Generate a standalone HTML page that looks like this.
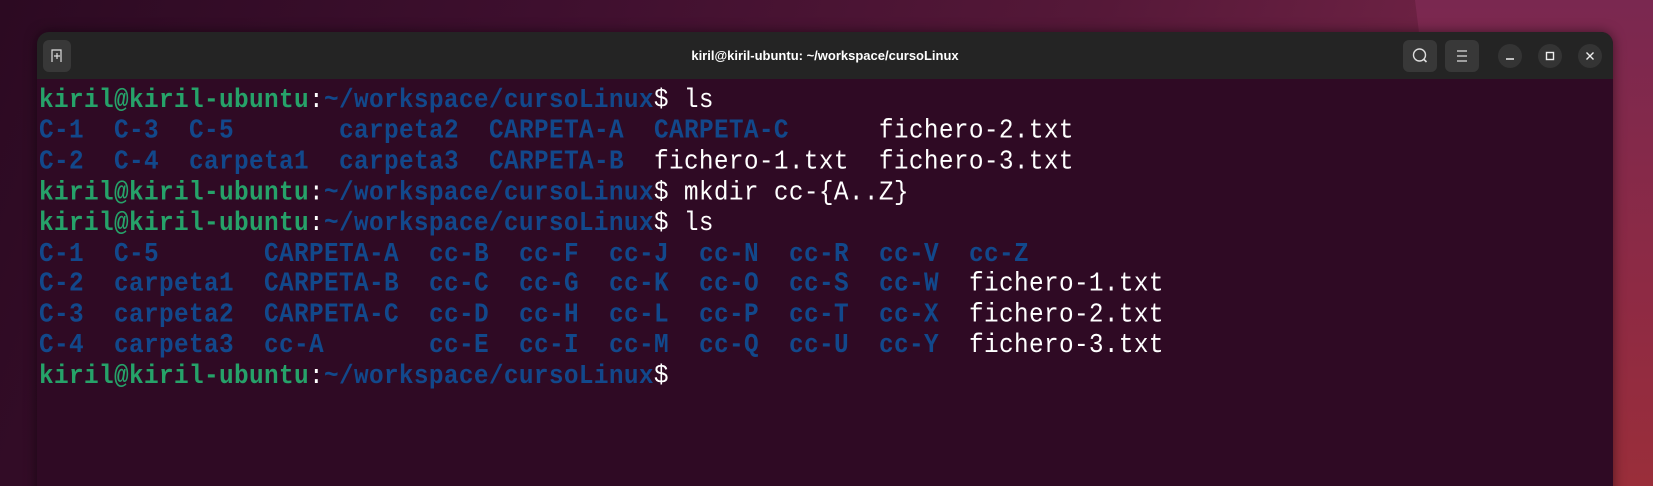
<!DOCTYPE html>
<html><head><meta charset="utf-8"><style>
html,body{margin:0;padding:0;width:1653px;height:486px;overflow:hidden}
body{background:linear-gradient(110deg,#2c0a22 0%,#3e0f2e 30%,#551838 60%,#6e2244 80%,#8a2a48 100%);position:relative;font-family:"Liberation Sans",sans-serif}
.r1{position:absolute;left:1415px;top:0;width:300px;height:486px;background:linear-gradient(180deg,#7a2850,#8e2a44 60%,#9a2e3a);clip-path:polygon(0 0,100% 0,100% 100%,20% 100%)}
.win{position:absolute;left:37px;top:32px;width:1576px;height:470px;border-radius:12px 12px 0 0;overflow:hidden;background:#2f0a24;box-shadow:0 0 12px rgba(0,0,0,.5)}
.tb{height:47px;background:#242424;position:relative}
.t{position:absolute;left:0;right:0;top:16px;text-align:center;color:#fff;font-weight:bold;font-size:13px}
.btn{position:absolute;top:8px;width:34px;height:32px;background:#383838;border-radius:6px}
.c{position:absolute;top:12px;width:24px;height:24px;border-radius:50%;background:#343434}
pre{margin:0;position:absolute;left:2px;top:54px;font-family:"Liberation Mono",monospace;font-size:24.4px;letter-spacing:0.36px;line-height:27.9px;color:#fff;transform:scaleY(1.1);transform-origin:0 0}
.g{color:#26a269;font-weight:bold}.b{color:#12488b;font-weight:bold}
</style></head><body>
<div class="r1"></div>
<div class="win">
<div class="tb">
<div class="btn" style="left:6px;width:28px"><svg width="28" height="32"><path d="M9 22V10h9v12M11 16h6M14 13v6" stroke="#ddd" fill="none" stroke-width="1.2"/></svg></div>
<div class="t">kiril@kiril-ubuntu: ~/workspace/cursoLinux</div>
<div class="btn" style="left:1366px"><svg width="34" height="32"><circle cx="16.5" cy="15" r="6" stroke="#ddd" fill="none" stroke-width="1.4"/><path d="M20.5 19l3 3" stroke="#ddd" stroke-width="1.6"/></svg></div>
<div class="btn" style="left:1408px"><svg width="34" height="32"><path d="M12 11h10M12 16h10M12 21h10" stroke="#ddd" stroke-width="1.3"/></svg></div>
<div class="c" style="left:1461px"><svg width="24" height="24"><path d="M8 15h8" stroke="#eee" stroke-width="1.4"/></svg></div>
<div class="c" style="left:1501px"><svg width="24" height="24"><rect x="8.5" y="8.5" width="7" height="7" stroke="#eee" fill="none" stroke-width="1.4"/></svg></div>
<div class="c" style="left:1541px"><svg width="24" height="24"><path d="M8.5 8.5l7 7M15.5 8.5l-7 7" stroke="#eee" stroke-width="1.4"/></svg></div>
</div>
<pre><span class="g">kiril@kiril-ubuntu</span>:<span class="b">~/workspace/cursoLinux</span>$ ls
<span class="b">C-1</span>  <span class="b">C-3</span>  <span class="b">C-5</span>       <span class="b">carpeta2</span>  <span class="b">CARPETA-A</span>  <span class="b">CARPETA-C</span>      fichero-2.txt
<span class="b">C-2</span>  <span class="b">C-4</span>  <span class="b">carpeta1</span>  <span class="b">carpeta3</span>  <span class="b">CARPETA-B</span>  fichero-1.txt  fichero-3.txt
<span class="g">kiril@kiril-ubuntu</span>:<span class="b">~/workspace/cursoLinux</span>$ mkdir cc-{A..Z}
<span class="g">kiril@kiril-ubuntu</span>:<span class="b">~/workspace/cursoLinux</span>$ ls
<span class="b">C-1</span>  <span class="b">C-5</span>       <span class="b">CARPETA-A</span>  <span class="b">cc-B</span>  <span class="b">cc-F</span>  <span class="b">cc-J</span>  <span class="b">cc-N</span>  <span class="b">cc-R</span>  <span class="b">cc-V</span>  <span class="b">cc-Z</span>
<span class="b">C-2</span>  <span class="b">carpeta1</span>  <span class="b">CARPETA-B</span>  <span class="b">cc-C</span>  <span class="b">cc-G</span>  <span class="b">cc-K</span>  <span class="b">cc-O</span>  <span class="b">cc-S</span>  <span class="b">cc-W</span>  fichero-1.txt
<span class="b">C-3</span>  <span class="b">carpeta2</span>  <span class="b">CARPETA-C</span>  <span class="b">cc-D</span>  <span class="b">cc-H</span>  <span class="b">cc-L</span>  <span class="b">cc-P</span>  <span class="b">cc-T</span>  <span class="b">cc-X</span>  fichero-2.txt
<span class="b">C-4</span>  <span class="b">carpeta3</span>  <span class="b">cc-A</span>       <span class="b">cc-E</span>  <span class="b">cc-I</span>  <span class="b">cc-M</span>  <span class="b">cc-Q</span>  <span class="b">cc-U</span>  <span class="b">cc-Y</span>  fichero-3.txt
<span class="g">kiril@kiril-ubuntu</span>:<span class="b">~/workspace/cursoLinux</span>$</pre>
</div>
</body></html>
